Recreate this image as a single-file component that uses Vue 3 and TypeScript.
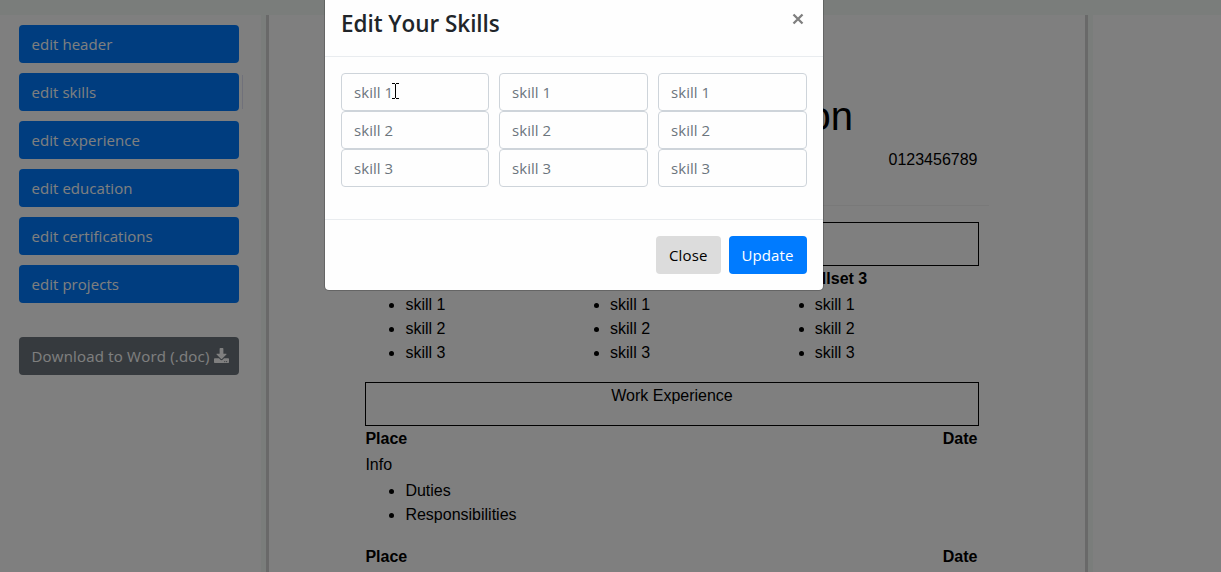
<script setup lang="ts">
const sections: string[] = ['header', 'skills', 'experience', 'education', 'certifications', 'projects']
const skills: string[] = ['skill 1', 'skill 2', 'skill 3']
const columns: number[] = [1, 2, 3]
</script>

<template>
  <div class="app">
    <div class="desk">
      <aside class="sidebar">
        <button v-for="s in sections" :key="s" class="btn primary" :class="[s]">edit {{ s }}</button>
        <button class="btn download">
          <span>Download to Word (.doc)</span>
          <svg class="icon" viewBox="0 0 512 512" aria-hidden="true">
            <path fill="currentColor" d="M216 0h80c13.300 0 24 10.700 24 24v168h87.700c17.800 0 26.700 21.500 14.100 34.100L269.700 378.300c-7.500 7.500-19.800 7.500-27.300 0L90.100 226.100c-12.600-12.600-3.700-34.100 14.100-34.100H192V24c0-13.300 10.700-24 24-24zm296 376v112c0 13.300-10.700 24-24 24H24c-13.300 0-24-10.700-24-24V376c0-13.300 10.700-24 24-24h146.700l49 49c20.100 20.100 52.500 20.100 72.600 0l49-49H488c13.300 0 24 10.700 24 24zm-124 88c0-11-9-20-20-20s-20 9-20 20 9 20 20 20 20-9 20-20zm64 0c0-11-9-20-20-20s-20 9-20 20 9 20 20 20 20-9 20-20z" />
          </svg>
        </button>
      </aside>
      <main class="page">
        <h1 class="name">on</h1>
        <div class="phone">0123456789</div>
        <div class="rule"></div>
        <div class="box"></div>
        <div class="skillsets">
          <div v-for="c in columns" :key="c">
            <div class="set-title"><b v-if="c === 3">Skillset 3</b></div>
            <ul>
              <li v-for="k in skills" :key="k">{{ k }}</li>
            </ul>
          </div>
        </div>
        <div class="box work">Work Experience</div>
        <div class="row"><b>Place</b><b>Date</b></div>
        <div class="info">Info</div>
        <ul class="duties">
          <li>Duties</li>
          <li>Responsibilities</li>
        </ul>
        <div class="row"><b>Place</b><b>Date</b></div>
      </main>
      <section class="blank"></section>
    </div>
    <div class="backdrop"></div>
    <div class="modal" role="dialog">
      <header class="modal-head">
        <h4>Edit Your Skills</h4>
        <button class="dismiss" aria-label="Close">
          <svg viewBox="0 0 12 12"><path d="M1.500 1.500L10.500 10.500M10.500 1.500L1.500 10.500" stroke="#7f7f7f" stroke-width="2.300" fill="none" /></svg>
        </button>
      </header>
      <div class="fields">
        <div v-for="c in columns" :key="c">
          <input v-for="k in skills" :key="k" :placeholder="k" />
        </div>
      </div>
      <footer class="modal-foot">
        <button class="btn light">Close</button>
        <button class="btn update">Update</button>
      </footer>
      <svg class="cursor" viewBox="0 0 7 16" shape-rendering="crispEdges">
        <path fill="#000" d="M0 0h3v1H0zM4 0h3v1H4zM3 1h1v14H3zM0 15h3v1H0zM4 15h3v1H4z" />
      </svg>
    </div>
  </div>
</template>

<style>
body { margin: 0; overflow: hidden; }
</style>

<style scoped>
* { box-sizing: border-box; }
.app {
  position: relative;
  width: 1221px;
  height: 572px;
  overflow: hidden;
  font-family: "Open Sans", "Noto Sans", sans-serif;
  font-size: 15px;
  line-height: 24px;
}
.desk {
  height: 572px;
  padding-top: 15px;
  background: #f4faf7;
  display: grid;
  grid-template-columns: 261px 822px 128px;
  column-gap: 5px;
}
.sidebar {
  background: #fff;
  padding: 10px 22px 0 19px;
  display: flex;
  flex-direction: column;
  gap: 10px;
}
.btn {
  font: inherit;
  height: 38px;
  padding: 0 12.500px;
  border: 0;
  border-radius: 4px;
  text-align: left;
  white-space: nowrap;
}
.primary { position: relative; background: #007bff; color: #fff; letter-spacing: 0.050px; }
.skills::after {
  content: "";
  position: absolute;
  right: -4px;
  top: 2px;
  width: 1px;
  height: 34px;
  background: #e0e2f4;
}
.download {
  margin-top: 24px;
  background: #6c757d;
  color: #fff;
  display: flex;
  align-items: center;
  justify-content: space-between;
  padding-right: 10px;
  letter-spacing: 0.200px;
}
.icon { width: 15px; height: 15px; flex: none; margin-top: -2px; }
.page {
  background: #fff;
  border: solid #d3d3d3;
  border-width: 0 3px;
  padding: 77px 106px 0 96px;
  font-family: "Liberation Sans", Arial, sans-serif;
  font-size: 16px;
  color: #000;
}
.name { margin: 0; padding-right: 126px; font-size: 40px; line-height: 48px; font-weight: 400; text-align: right; }
.phone { margin-top: 8px; padding-right: 1.500px; text-align: right; }
.rule { height: 1px; margin: 33px -10px 16px; background: #f2f2f2; }
.box { height: 44px; border: 1px solid #000; text-align: center; }
.skillsets { display: grid; grid-template-columns: repeat(3, 1fr); padding-top: 1px; }
.set-title { height: 26px; padding-left: 23.500px; }
ul { margin: 0; padding-left: 40.400px; }
.work { margin-top: 17px; line-height: 26px; }
.row { display: flex; justify-content: space-between; padding: 1px 1.500px 0 0.400px; }
.info { margin: 2px 0; padding-left: 0.400px; }
.duties { margin-bottom: 17px; }
.blank { background: #fff; }
.backdrop { position: absolute; inset: 0; background: rgba(0, 0, 0, 0.5); }
.modal {
  position: absolute;
  left: 324px;
  top: -10px;
  width: 500px;
  height: 301px;
  border: 1px solid rgba(0, 0, 0, 0.2);
  border-radius: 5px;
  background: #fefefe;
  background-clip: padding-box;
}
.modal-head {
  height: 66px;
  padding: 14px 19px 0 16px;
  border-bottom: 1px solid #e9ecef;
  display: flex;
  justify-content: space-between;
}
h4 { margin: 0; font-size: 22.500px; line-height: 37px; font-weight: 600; letter-spacing: -0.050px; color: #212529; }
.dismiss { width: 12px; height: 12px; margin-top: 8px; padding: 0; border: 0; background: none; display: block; }
.dismiss svg { width: 12px; height: 12px; display: block; }
.fields {
  height: 162px;
  padding: 16px;
  display: grid;
  grid-template-columns: 148px 149px 149px;
  column-gap: 10px;
}
.fields > :first-child { margin-right: 0; }
input {
  display: block;
  width: 100%;
  height: 38px;
  padding: 0 12px;
  border: 1px solid #ced4da;
  border-radius: 4px;
  font: inherit;
  letter-spacing: 0.050px;
  background: #fefefe;
}
input::placeholder { color: #6c757d; opacity: 1; }
.modal-foot {
  height: 71px;
  padding: 16px;
  border-top: 1px solid #e9ecef;
  display: flex;
  justify-content: flex-end;
  gap: 8px;
}
.light { width: 65px; background: #dcdcdc; color: #000; letter-spacing: 0.150px; padding-left: 13px; }
.update { width: 78px; background: #007bff; color: #fff; letter-spacing: 0.100px; }
.cursor { position: absolute; left: 67px; top: 92px; width: 7px; height: 16px; }
</style>
